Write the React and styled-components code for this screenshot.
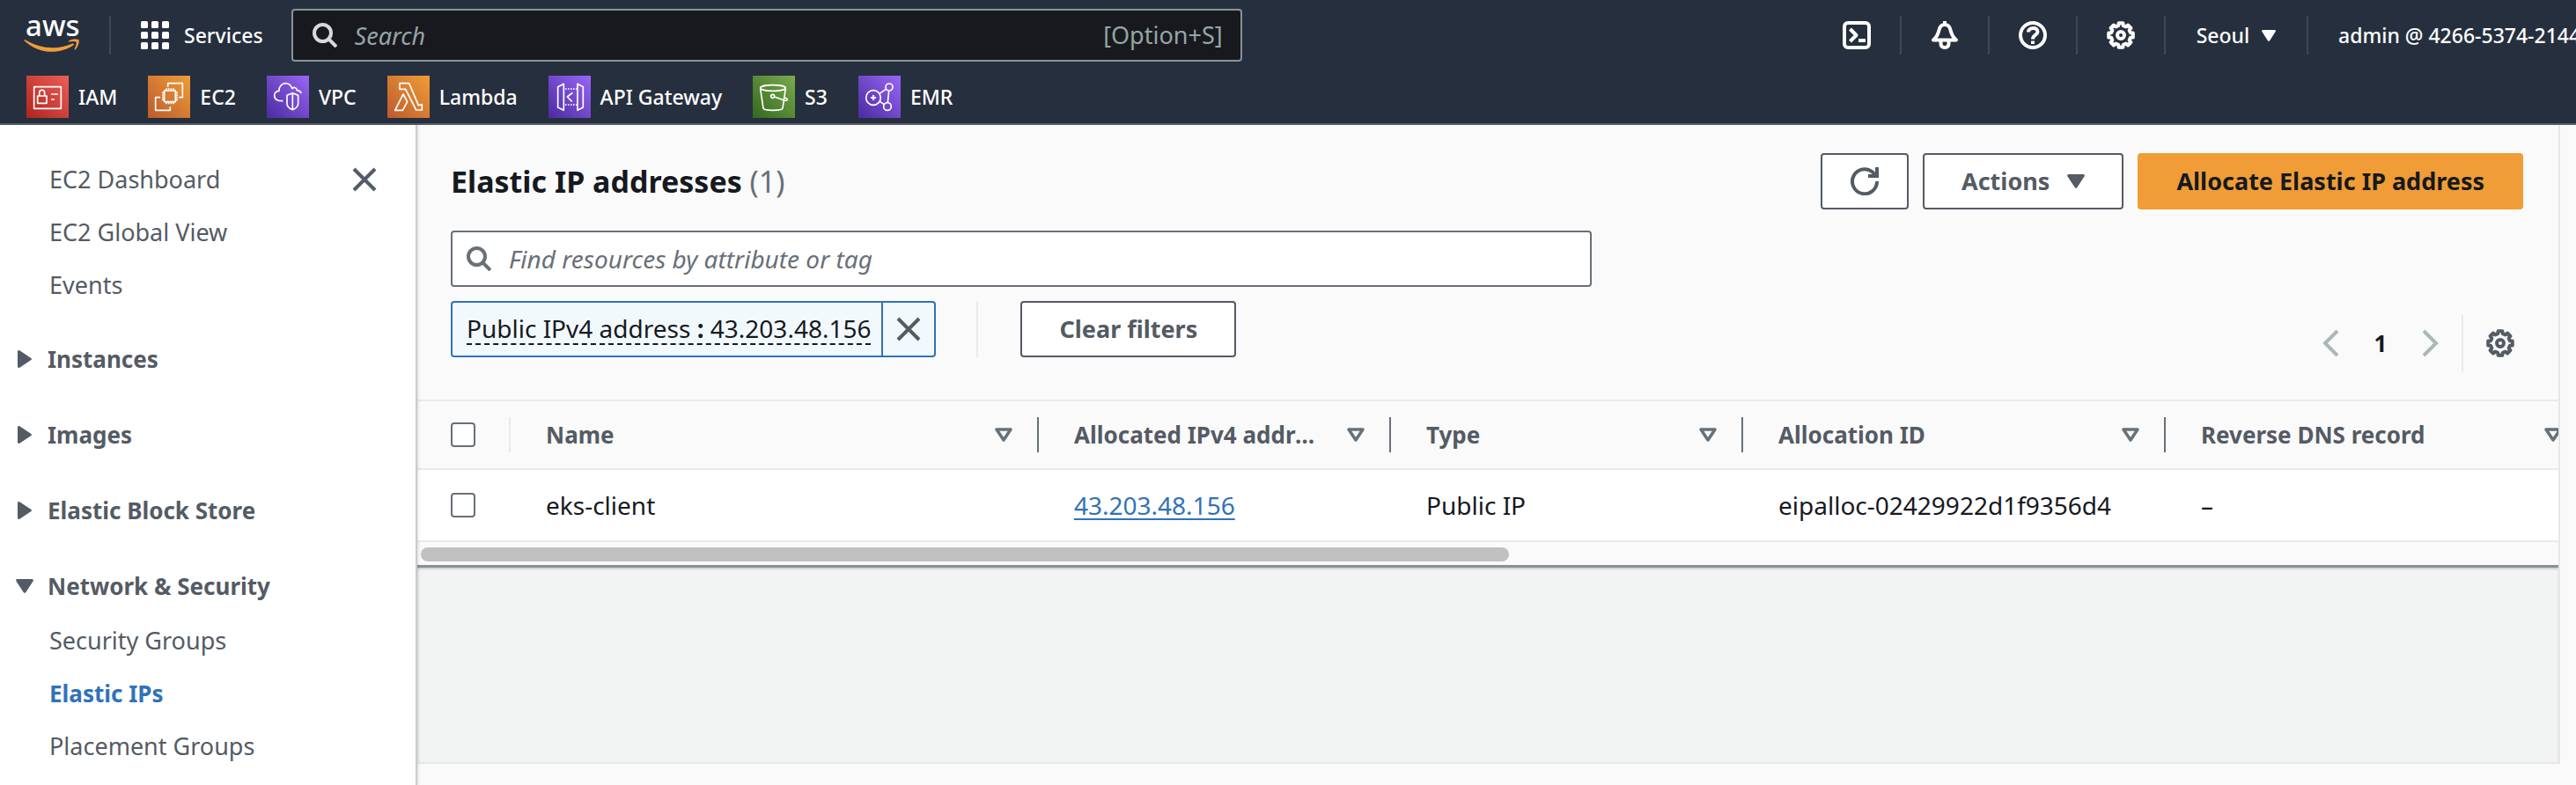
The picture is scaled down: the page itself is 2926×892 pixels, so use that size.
import React from 'react';
import styled, { createGlobalStyle, css } from 'styled-components';

const color = {
  header: '#262f3e',
  headerLine: '#414750',
  slate: '#545b64',
  grey: '#687078',
  ink: '#16191f',
  blue: '#3072b9',
  orange: '#f09d37',
  line: '#eaeaeb',
  surface: '#fafafa',
};

const Global = createGlobalStyle`
  *, *::before, *::after { box-sizing: border-box; }
  body {
    margin: 0;
    background: ${color.surface};
    color: ${color.ink};
    font-family: "Noto Sans", "Noto Sans CJK KR", sans-serif;
    font-size: 27px;
    line-height: 36px;
    overflow-x: hidden;
  }
  button, input { font: inherit; color: inherit; margin: 0; }
  button { padding: 0; border: 0; background: none; cursor: pointer; }
  a { color: inherit; text-decoration: none; }
  ul { list-style: none; margin: 0; padding: 0; }
  svg { display: block; flex: none; }
`;

const Page = styled.div`
  min-height: 100vh;
  display: flex;
  flex-direction: column;
  overflow: hidden;
`;

/* ---------- Header ---------- */

const Header = styled.header`
  background: ${color.header};
  color: #fff;
  border-bottom: 2px solid ${color.slate};
  font-size: 23px;
  font-weight: 500;
`;

const TopBar = styled.div`
  display: flex;
  align-items: center;
  height: 80px;
  padding-left: 27px;
`;

const HeaderDivider = styled.span`
  flex: none;
  width: 2px;
  height: 44px;
  background: ${color.headerLine};
`;

const LogoLink = styled.a`
  margin-right: 33px;
  svg { overflow: visible; }
`;

const ServicesButton = styled.button`
  display: flex;
  align-items: center;
  gap: 17px;
  margin: 0 32px 0 34px;
`;

const GlobalSearch = styled.label`
  flex: 1 1 0;
  max-width: 1080px;
  height: 60px;
  display: flex;
  align-items: center;
  gap: 20px;
  padding: 0 20px 0 22px;
  background: #18191e;
  border: 2px solid #879596;
  border-radius: 4px;
  color: #95a5a6;
  font-size: 27px;
  font-weight: 400;
`;

const BareInput = styled.input`
  flex: 1;
  min-width: 0;
  height: 100%;
  padding: 0;
  border: 0;
  outline: 0;
  background: transparent;
  &::placeholder {
    color: inherit;
    font-style: italic;
    opacity: 1;
  }
`;

const Utilities = styled.nav`
  display: flex;
  align-items: center;
  margin-left: auto;
`;

const IconButton = styled.button`
  display: grid;
  place-items: center;
  width: 98px;
  height: 60px;
`;

const RegionButton = styled.button`
  display: flex;
  align-items: center;
  justify-content: center;
  gap: 14px;
  width: 160px;
`;

const AccountButton = styled.button`
  width: 304px;
  padding-left: 34px;
  text-align: left;
  white-space: nowrap;
  overflow: hidden;
`;

const Favorites = styled.ul`
  display: flex;
  gap: 35px;
  height: 60px;
  padding: 6px 30px;
`;

const Favorite = styled.a`
  display: flex;
  align-items: center;
  gap: 11px;
`;

const ServiceTile = styled.span`
  display: block;
  width: 48px;
  height: 48px;
  background: linear-gradient(45deg, ${(p) => p.$from}, ${(p) => p.$to});
`;

/* ---------- Body ---------- */

const Body = styled.div`
  flex: 1;
  display: flex;
`;

const Sidebar = styled.nav`
  position: relative;
  flex: none;
  width: 474px;
  padding-top: 32px;
  background: #fff;
  color: ${color.slate};
  border-right: 2px solid #c9cccf;
  box-shadow: 1px 0 3px rgba(0, 28, 36, 0.15);
`;

const SideRow = styled.div`
  display: flex;
  align-items: center;
  justify-content: space-between;
  height: 60px;
  padding: 0 44px 0 56px;
`;

const SideLink = styled.a`
  ${(p) =>
    p.$active &&
    css`
      color: ${color.blue};
      font-size: 26px;
      font-weight: 700;
    `}
`;

const SectionButton = styled.button`
  display: flex;
  align-items: center;
  gap: 14px;
  width: 100%;
  height: 64px;
  margin-top: 22px;
  padding-left: 16px;
  font-size: 26px;
  font-weight: 700;
`;

const Main = styled.main`
  flex: 1;
  min-width: 0;
  display: flex;
  flex-direction: column;
  margin: 0 18px 24px 0;
  border-right: 2px solid #e7e7e7;
  border-bottom: 2px solid #e7e7e7;
`;

const TitleRow = styled.div`
  display: flex;
  align-items: center;
  gap: 16px;
  padding: 32px 40px 24px 38px;
`;

const Title = styled.h1`
  flex: 1;
  margin: 0;
  font-size: 34px;
  line-height: 44px;
  font-weight: 700;
`;

const Count = styled.span`
  color: ${color.grey};
  font-weight: 400;
`;

const Button = styled.button`
  display: flex;
  align-items: center;
  justify-content: center;
  gap: 20px;
  height: 64px;
  padding: 0 ${(p) => (p.$icon ? 32 : 42)}px;
  border: 2px solid ${(p) => (p.$primary ? color.orange : color.slate)};
  border-radius: 4px;
  background: ${(p) => (p.$primary ? color.orange : '#fff')};
  color: ${(p) => (p.$primary ? color.ink : color.slate)};
  font-weight: 700;
`;

const Tools = styled.div`
  display: flex;
  align-items: flex-end;
  justify-content: space-between;
  padding: 0 50px 32px 38px;
`;

const Filters = styled.div`
  flex: 0 1 1296px;
  display: flex;
  flex-direction: column;
  gap: 16px;
  padding-bottom: 16px;
`;

const FilterBox = styled.label`
  display: flex;
  align-items: center;
  gap: 20px;
  height: 64px;
  padding: 0 16px;
  border: 2px solid ${color.grey};
  border-radius: 4px;
  background: #fff;
  color: ${color.grey};
  font-size: 28px;
`;

const TokenRow = styled.div`
  display: flex;
  align-items: center;
`;

const Token = styled.div`
  display: flex;
  height: 64px;
  border: 2px solid ${color.blue};
  border-radius: 4px;
  background: #f2f9fd;
  font-size: 28px;
`;

const TokenButton = styled.button`
  padding: 0 12px 0 16px;
  display: flex;
  align-items: center;
`;

const TokenText = styled.span`
  line-height: 34px;
  border-bottom: 2px dashed ${color.ink};
`;

const TokenRemove = styled.button`
  display: grid;
  place-items: center;
  width: 60px;
  border-left: 2px solid ${color.blue};
  color: ${color.slate};
`;

const Separator = styled.span`
  width: 2px;
  height: 64px;
  margin: 0 ${(p) => p.$right}px 0 ${(p) => p.$left}px;
  background: ${color.line};
`;

const Pagination = styled.nav`
  display: flex;
  align-items: center;
  height: 64px;
`;

const PageNumber = styled.button`
  width: 80px;
  font-size: 26px;
  font-weight: 700;
`;

const PlainButton = styled.button`
  display: grid;
  place-items: center;
  color: ${(p) => (p.$muted ? '#aab7b8' : color.slate)};
`;

const TableClip = styled.div`
  overflow: hidden;
`;

const Table = styled.table`
  width: 2466px;
  table-layout: fixed;
  border-collapse: separate;
  border-spacing: 0;
`;

const HeadCell = styled.th`
  width: ${(p) => p.$width}px;
  height: 80px;
  padding: 0 0 0 ${(p) => (p.$check ? 38 : 40)}px;
  border-top: 2px solid ${color.line};
  border-bottom: 2px solid ${color.line};
  background: ${color.surface};
  color: ${color.slate};
  font-size: 26px;
  font-weight: 700;
  text-align: left;
`;

const HeadContent = styled.div`
  display: flex;
  align-items: center;
  justify-content: space-between;
  border-right: 2px solid ${(p) => (p.$light ? color.line : color.grey)};
  height: 40px;
`;

const HeadLabel = styled.span`
  flex: 1;
  min-width: 0;
  margin-right: 26px;
  overflow: hidden;
  text-overflow: ellipsis;
  white-space: nowrap;
`;

const SortButton = styled.button`
  margin-right: 28px;
  color: ${color.grey};
`;

const Cell = styled.td`
  height: 82px;
  padding: 0 0 0 ${(p) => (p.$check ? 38 : 40)}px;
  border-bottom: 2px solid ${color.line};
  background: #fff;
  font-size: 28px;
  white-space: nowrap;
`;

const IpLink = styled.a`
  color: ${color.blue};
  text-decoration: underline;
  text-decoration-thickness: 2px;
  text-underline-offset: 4px;
`;

const Checkbox = styled.input`
  appearance: none;
  display: block;
  width: 28px;
  height: 28px;
  border: 2px solid ${color.grey};
  border-radius: 4px;
  background: #fff;
`;

const ScrollTrack = styled.div`
  height: 26px;
  padding: 6px 4px;
`;

const ScrollThumb = styled.div`
  width: 51%;
  height: 16px;
  border-radius: 8px;
  background: #c1c1c1;
`;

const SplitPanel = styled.section`
  flex: 1;
  min-height: 120px;
  border-top: 3px solid #879196;
  background: #f2f3f3;
  box-shadow: inset 0 2px 2px rgba(0, 28, 36, 0.15);
`;

/* ---------- Icons ---------- */

const Line = ({ size = 32, box = 32, width = 4, children }) => (
  <svg
    width={size}
    height={size}
    viewBox={`0 0 ${box} ${box}`}
    fill="none"
    stroke="currentColor"
    strokeWidth={width}
    strokeLinejoin="round"
    aria-hidden="true"
  >
    {children}
  </svg>
);

const gearOutline = (() => {
  const points = [];
  for (let tooth = 0; tooth < 8; tooth += 1) {
    const spots = [[-14, 11.2], [-10, 14], [10, 14], [14, 11.2]];
    spots.forEach(([offset, radius]) => {
      const angle = ((tooth * 45 + offset) * Math.PI) / 180;
      points.push(`${(16 + radius * Math.sin(angle)).toFixed(2)} ${(16 - radius * Math.cos(angle)).toFixed(2)}`);
    });
  }
  return `M${points.join('L')}Z`;
})();

const GearIcon = () => (
  <Line>
    <path d={gearOutline} />
    <circle cx="16" cy="16" r="4" />
  </Line>
);

const SearchIcon = ({ stroke = 'currentColor' }) => (
  <svg width="28" height="28" viewBox="0 0 28 28" fill="none" stroke={stroke} strokeWidth="4" aria-hidden="true">
    <circle cx="11.500" cy="11.500" r="9.500" />
    <path d="M18 18L27 27" />
  </svg>
);

const CloseIcon = () => (
  <Line size={28} box={28} width={4}>
    <path d="M2 2L26 26M26 2L2 26" />
  </Line>
);

const CaretIcon = ({ width = 20, height = 16 }) => (
  <svg width={width} height={height} viewBox="0 0 20 16" fill="currentColor" aria-hidden="true">
    <path d="M1.5 0H18.500Q20.500 .5 19.500 2.500L11.500 14.800Q10 17 8.500 14.800L.5 2.500Q-.5 .5 1.500 0Z" />
  </svg>
);

const CaretRightIcon = () => (
  <svg width="24" height="20" viewBox="0 0 24 20" fill="currentColor" aria-hidden="true">
    <path d="M4 1.500Q4.300-.5 6.300 .3L19 8.700Q21 10 19 11.300L6.300 19.700Q4.300 20.500 4 18.500Z" />
  </svg>
);

const CaretDownIcon = () => (
  <svg width="24" height="20" viewBox="0 0 24 20" fill="currentColor" aria-hidden="true">
    <path d="M3.500 2H20.500Q22.500 2.500 21.500 4.500L13.500 16.800Q12 19 10.500 16.800L2.500 4.500Q1.500 2.500 3.500 2Z" />
  </svg>
);

const SortIcon = () => (
  <svg width="20" height="16" viewBox="0 0 20 16" fill="none" stroke="currentColor" strokeWidth="3.500" strokeLinejoin="round" aria-hidden="true">
    <path d="M2 2H18L10 14Z" />
  </svg>
);

const AwsLogo = () => (
  <svg width="64" height="56" viewBox="0 0 64 56" role="img" aria-label="aws">
    <text x="2" y="29" fill="#fff" fontFamily="Noto Sans, sans-serif" fontSize="33" fontWeight="500">
      aws
    </text>
    <path
      fill={color.orange}
      transform="translate(0 1)"
      d="M.6 33.200C.1 32.700 .7 31.700 1.600 32.200C12 38.200 22.500 41.200 33 41.200C40.500 41.200 48 39.600 55.500 36.500C56.700 36 57.700 37.300 56.500 38.200C50 43 40.500 45.800 32 45.800C20 45.800 8.900 41.200 .6 33.200ZM59.500 34.800C58.500 33.500 53.500 34.200 51.200 34.500C50.500 34.600 50.400 34 51 33.500C55 30.700 61.700 31.500 62.500 32.500C63.300 33.500 62.300 40.200 58.500 43.400C57.900 43.900 57.400 43.600 57.600 42.900C58.500 40.800 60.400 36 59.500 34.800Z"
    />
  </svg>
);

const ServicesIcon = () => (
  <svg width="32" height="32" viewBox="0 0 32 32" fill="#fff" aria-hidden="true">
    {[0, 12, 24].map((y) =>
      [0, 12, 24].map((x) => <rect key={`${x}-${y}`} x={x} y={y} width="8" height="8" rx="1.500" />)
    )}
  </svg>
);

const services = [
  {
    name: 'IAM', from: '#b0241f', to: '#ea5f56',
    art: (
      <>
        <rect x="26" y="38" width="92" height="74" />
        <rect x="38" y="69" width="31" height="25" />
        <path d="M44 69V58a9 9 0 0 1 18 0V69M84 63H108M84 81H96" />
      </>
    ),
  },
  {
    name: 'EC2', from: '#bc5a2e', to: '#f09d37',
    art: (
      <>
        <rect x="56" y="51" width="38" height="38" />
        <path d="M68 38V26H118V74H106M42 74H26V118H76V106" />
        <path d="M63 43V50M71 43V50M79 43V50M87 43V50M63 90V97M71 90V97M79 90V97M87 90V97M48 58H55M48 66H55M48 74H55M48 82H55M95 58H102M95 66H102M95 74H102M95 82H102" />
      </>
    ),
  },
  {
    name: 'VPC', from: '#4a2ba0', to: '#9966f5',
    art: (
      <>
        <path d="M55 86C39 87 26 81 26 68C26 57 34 52 42 52C40 38 52 26 64 26C76 26 83 34 87 44C93 37 102 41 103 50C111 50 115 54 118 60" />
        <path d="M88 59L107 67V95Q107 108 88 116Q69 108 69 95V67ZM88 59V116" />
      </>
    ),
  },
  {
    name: 'Lambda', from: '#bc5a2e', to: '#f09d37',
    art: <path d="M42 26H74L106 101L118 98V117H98L62 46H42ZM54 63L68 89L52 118H26Z" />,
  },
  {
    name: 'API Gateway', from: '#4a2ba0', to: '#9966f5',
    art: (
      <>
        <path d="M32 38L52 28V118L32 108ZM118 38L99 28V118L118 108ZM82 58L64 72L80 88" />
        <path d="M57 45H96M57 99H96" strokeDasharray="5 4" />
      </>
    ),
  },
  {
    name: 'S3', from: '#34681f', to: '#7aab4f',
    art: (
      <>
        <ellipse cx="69" cy="42" rx="43" ry="10" />
        <path d="M26 44L36 111Q38 118 69 118Q100 118 102 111L112 44M74 72L108 84Q120 87 117 79L109 74" />
        <circle cx="68" cy="70" r="6" />
      </>
    ),
  },
  {
    name: 'EMR', from: '#4a2ba0', to: '#9966f5',
    art: (
      <>
        <circle cx="51" cy="75" r="25" />
        <circle cx="105" cy="39" r="12" />
        <circle cx="99" cy="105" r="13" />
        <path d="M72 61L94 46M73 88L88 98M104 52L100 92" />
        <path d="M42 75H60M51 66V84" strokeWidth="6" />
      </>
    ),
  },
];

/* ---------- Page data ---------- */

const topLinks = ['EC2 Dashboard', 'EC2 Global View', 'Events'];
const closedSections = ['Instances', 'Images', 'Elastic Block Store'];
const networkLinks = ['Security Groups', 'Elastic IPs', 'Placement Groups'];
const columns = [
  ['Name', 600],
  ['Allocated IPv4 address', 400],
  ['Type', 400],
  ['Allocation ID', 480],
  ['Reverse DNS record', 480],
];

export default function App() {
  return (
    <Page>
      <Global />
      <Header>
        <TopBar>
          <LogoLink href="#home"><AwsLogo /></LogoLink>
          <HeaderDivider />
          <ServicesButton type="button"><ServicesIcon />Services</ServicesButton>
          <GlobalSearch>
            <SearchIcon stroke="#d5dbdb" />
            <BareInput type="text" placeholder="Search" aria-label="Search" />
            <span>[Option+S]</span>
          </GlobalSearch>
          <Utilities aria-label="Utilities">
            <IconButton type="button" aria-label="CloudShell">
              <Line>
                <rect x="2" y="2" width="28" height="28" rx="4" />
                <path d="M8.500 9L15.500 16L8.500 23M18 22H26" />
              </Line>
            </IconButton>
            <HeaderDivider />
            <IconButton type="button" aria-label="Notifications">
              <Line>
                <path d="M16 0V4M3 21.500C8 17 8.500 14 9.500 10C10.500 5.500 13 4 16 4C19 4 21.500 5.500 22.500 10C23.500 14 24 17 29 21.500Z" />
                <path d="M11.500 23V25.500C11.500 28.500 13 30 16 30C19 30 20.500 28.500 20.500 25.500V23" />
              </Line>
            </IconButton>
            <HeaderDivider />
            <IconButton type="button" aria-label="Help">
              <Line>
                <circle cx="16" cy="16" r="14" />
                <path d="M11 12.500C11 6.500 21.500 6.500 21.500 12C21.500 16 16 15.500 16 20.500M16 22.500V26" />
              </Line>
            </IconButton>
            <HeaderDivider />
            <IconButton type="button" aria-label="Settings"><GearIcon /></IconButton>
            <HeaderDivider />
            <RegionButton type="button">Seoul<CaretIcon width={16} height={13} /></RegionButton>
            <HeaderDivider />
            <AccountButton type="button">admin @ 4266-5374-2144</AccountButton>
          </Utilities>
        </TopBar>
        <Favorites>
          {services.map((s) => (
            <li key={s.name}>
              <Favorite href={`#${s.name}`}>
                <ServiceTile $from={s.from} $to={s.to}>
                  <Line size={48} box={144} width={5}>{s.art}</Line>
                </ServiceTile>
                {s.name}
              </Favorite>
            </li>
          ))}
        </Favorites>
      </Header>

      <Body>
        <Sidebar aria-label="EC2">
          {topLinks.map((name, i) => (
            <SideRow key={name}>
              <SideLink href="#nav">{name}</SideLink>
              {i === 0 && <PlainButton type="button" aria-label="Close navigation"><CloseIcon /></PlainButton>}
            </SideRow>
          ))}
          {closedSections.map((name) => (
            <SectionButton key={name} type="button" aria-expanded="false"><CaretRightIcon />{name}</SectionButton>
          ))}
          <SectionButton type="button" aria-expanded="true"><CaretDownIcon />Network &amp; Security</SectionButton>
          {networkLinks.map((name) => (
            <SideRow key={name}>
              <SideLink href="#nav" $active={name === 'Elastic IPs'}>{name}</SideLink>
            </SideRow>
          ))}
        </Sidebar>

        <Main>
          <TitleRow>
            <Title>Elastic IP addresses <Count>(1)</Count></Title>
            <Button type="button" $icon aria-label="Refresh">
              <Line>
                <path strokeLinejoin="miter" d="M30 16A14 14 0 1 1 25 5.500L28 9M30 0V10H20" />
              </Line>
            </Button>
            <Button type="button">Actions<CaretIcon /></Button>
            <Button type="button" $primary>Allocate Elastic IP address</Button>
          </TitleRow>

          <Tools>
            <Filters>
              <FilterBox>
                <SearchIcon />
                <BareInput type="text" placeholder="Find resources by attribute or tag" aria-label="Find resources" />
              </FilterBox>
              <TokenRow>
                <Token>
                  <TokenButton type="button">
                    <TokenText>Public IPv4 address <b>:</b> 43.203.48.156</TokenText>
                  </TokenButton>
                  <TokenRemove type="button" aria-label="Remove filter"><CloseIcon /></TokenRemove>
                </Token>
                <Separator $left={46} $right={48} />
                <Button type="button">Clear filters</Button>
              </TokenRow>
            </Filters>
            <Pagination aria-label="Pages">
              <PlainButton type="button" $muted aria-label="Previous page">
                <Line><path strokeLinejoin="miter" d="M23 2L9 16L23 30" /></Line>
              </PlainButton>
              <PageNumber type="button" aria-current="page">1</PageNumber>
              <PlainButton type="button" $muted aria-label="Next page">
                <Line><path strokeLinejoin="miter" d="M9 2L23 16L9 30" /></Line>
              </PlainButton>
              <Separator $left={20} $right={26} />
              <PlainButton type="button" aria-label="Preferences"><GearIcon /></PlainButton>
            </Pagination>
          </Tools>

          <TableClip>
            <Table>
              <thead>
                <tr>
                  <HeadCell $width={106} $check>
                    <HeadContent $light><Checkbox type="checkbox" aria-label="Select all" /></HeadContent>
                  </HeadCell>
                  {columns.map(([name, width]) => (
                    <HeadCell key={name} $width={width}>
                      <HeadContent>
                        <HeadLabel>{name}</HeadLabel>
                        <SortButton type="button" aria-label={`Sort by ${name}`}><SortIcon /></SortButton>
                      </HeadContent>
                    </HeadCell>
                  ))}
                </tr>
              </thead>
              <tbody>
                <tr>
                  <Cell $check><Checkbox type="checkbox" aria-label="Select eks-client" /></Cell>
                  <Cell>eks-client</Cell>
                  <Cell><IpLink href="#address">43.203.48.156</IpLink></Cell>
                  <Cell>Public IP</Cell>
                  <Cell>eipalloc-02429922d1f9356d4</Cell>
                  <Cell>–</Cell>
                </tr>
              </tbody>
            </Table>
          </TableClip>
          <ScrollTrack><ScrollThumb /></ScrollTrack>
          <SplitPanel aria-label="Details" />
        </Main>
      </Body>
    </Page>
  );
}
